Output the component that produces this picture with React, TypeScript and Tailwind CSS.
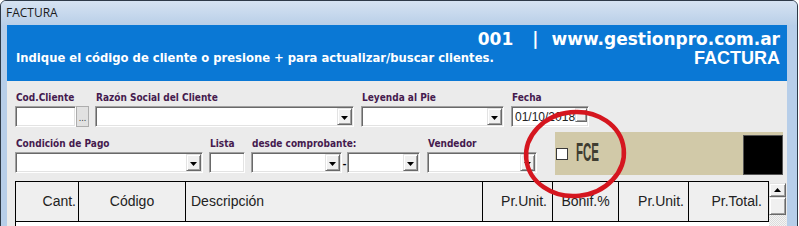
import React from 'react'

const sunken =
  'bg-white border border-t-[#a0a0a0] border-l-[#a0a0a0] border-b-white border-r-white shadow-[inset_1px_1px_0_#696969,inset_-1px_-1px_0_#e3e3e3]'
const raised =
  'bg-[#f0f0f0] border border-t-[#e3e3e3] border-l-[#e3e3e3] border-b-[#696969] border-r-[#696969] shadow-[inset_1px_1px_0_#ffffff,inset_-1px_-1px_0_#a0a0a0]'
const label =
  "h-[13px] leading-[13px] pl-[1px] text-[10px] font-bold text-[#451a4e] font-['DejaVu_Sans_Condensed','DejaVu_Sans',sans-serif] whitespace-nowrap"

const Arrow = ({ up }: { up?: boolean }) => (
  <svg width="7" height="4" viewBox="0 0 7 4">
    <path d={up ? 'M0 4h7L3.5 0z' : 'M0 0h7L3.5 4z'} fill="#000" />
  </svg>
)

const DropBtn = () => (
  <div className={`w-[15px] h-[17px] ${raised} flex items-center justify-center pt-[2px]`}>
    <Arrow />
  </div>
)

const Combo = ({ className }: { className: string }) => (
  <div className={`${className} h-[21px] ${sunken} flex items-center justify-end pr-[1px]`}>
    <DropBtn />
  </div>
)

const Field = ({ title, children, className }: { title: string; children: React.ReactNode; className?: string }) => (
  <div className={`flex flex-col ${className ?? ''}`}>
    <div className={label}>{title}</div>
    <div className="mt-[2px] flex items-center">{children}</div>
  </div>
)

// ? Table header columns
const columns = [
  { title: 'Cant.', cls: 'w-[63px] justify-end pr-[2px]' },
  { title: 'Código', cls: 'w-[107px] justify-center' },
  { title: 'Descripción', cls: 'w-[297px] justify-start pl-[5px]' },
  { title: 'Pr.Unit.', cls: 'w-[70px] justify-end pr-[5px]' },
  { title: 'Bonif.%', cls: 'w-[66px] justify-center' },
  { title: 'Pr.Unit.', cls: 'w-[70px] justify-end pr-[4px]' },
  { title: 'Pr.Total.', cls: 'w-[79px] justify-end pr-[6px]' },
]

export default function App() {
  return (
    <div className="relative w-[799px] h-[226px] overflow-hidden bg-white">
      <div className="w-[798px] h-[240px] flex flex-col border border-[#2e3a48] rounded-t-[6px] bg-[#b7cee9] overflow-hidden">
        {/* title bar */}
        <div className="h-[24px] shrink-0 flex items-center pl-[5px] bg-gradient-to-b from-[#d6e3f2] to-[#b9cfe8] text-[12px] text-[#1a1a1a] font-['Open_Sans',sans-serif]">
          FACTURA
        </div>

        <div className="flex-1 ml-[6px] mr-[10px] bg-[#ebebeb] flex flex-col">
          {/* blue header */}
          <div className="h-[56px] shrink-0 bg-[#0a78d5] text-white flex flex-col pt-[4px] pr-[7px] pl-[9px]">
            <div className="h-[20px] leading-[20px] flex justify-end items-center text-[17px] font-bold font-['DejaVu_Sans',sans-serif]">
              <span>001</span>
              <span className="ml-[19px] mr-[13px]">|</span>
              <span>www.gestionpro.com.ar</span>
            </div>
            <div className="h-[19px] flex justify-between items-center">
              <span className="text-[11.6px] font-bold font-['DejaVu_Sans',sans-serif]">
                Indique el código de cliente o presione + para actualizar/buscar clientes.
              </span>
              <span className="text-[18px] font-bold font-['Liberation_Sans',sans-serif]">FACTURA</span>
            </div>
          </div>

          {/* form */}
          <div className="pl-[8px] pt-[10px] flex flex-col">
            {/* row 1 */}
            <div className="flex items-start">
              <Field title="Cod.Cliente">
                <div className={`w-[61px] h-[21px] ${sunken}`} />
                <div className="w-[13px] h-[21px] bg-[#e1e1e1] border border-[#adadad] flex items-end justify-center pb-[3px] text-[8px] leading-none text-[#333] font-['DejaVu_Sans',sans-serif]">
                  ...
                </div>
              </Field>
              <Field title="Razón Social del Cliente" className="ml-[6px]">
                <Combo className="w-[259px]" />
              </Field>
              <Field title="Leyenda al Pie" className="ml-[7px]">
                <Combo className="w-[143px]" />
              </Field>
              <Field title="Fecha" className="ml-[7px]">
                <div className={`w-[78px] h-[21px] ${sunken} flex items-center justify-between pl-[3px] pr-[1px]`}>
                  <span className="text-[12px] text-[#222] font-['Liberation_Sans',sans-serif]">01/10/2018</span>
                  <div className={`w-[16px] h-[14px] self-start mt-[1px] ${raised}`} />
                </div>
              </Field>
            </div>

            {/* row 2 */}
            <div className="mt-[5px] flex items-start">
              <Field title="Condición de Pago" className="pt-[5px]">
                <Combo className="w-[188px]" />
              </Field>
              <Field title="Lista" className="pt-[5px] ml-[6px]">
                <div className={`w-[36px] h-[21px] ${sunken}`} />
              </Field>
              <Field title="desde comprobante:" className="pt-[5px] ml-[6px]">
                <Combo className="w-[91px]" />
                <span className="w-[5px] text-center text-[11px] font-bold leading-none text-black">-</span>
                <Combo className="w-[73px]" />
              </Field>
              <Field title="Vendedor" className="pt-[5px] ml-[7px]">
                <Combo className="w-[110px]" />
              </Field>
              {/* FCE panel */}
              <div className="ml-[18px] w-[228px] h-[43px] bg-[#d1c9a8] flex items-start">
                <div className="h-full flex items-center pl-[1px]">
                  <div className="w-[12px] h-[12px] bg-white border border-[#3a3a3a]" />
                  <span className="ml-[8px] inline-block w-[28px] overflow-visible">
                    <span className="inline-block origin-left scale-x-[0.46] text-[25px] font-bold leading-none text-[#3f3d31] font-['Liberation_Sans',sans-serif]">
                      FCE
                    </span>
                  </span>
                </div>
                <div className="ml-auto mt-[3px] w-[40px] h-[40px] bg-black border border-[#555]" />
              </div>
            </div>

            {/* grid */}
            <div className="mt-[6px] flex items-start">
              <div className="flex flex-col">
                <div className="flex h-[41px] border border-black bg-[#efefef]">
                  {columns.map((c, i) => (
                    <div
                      key={i}
                      className={`${c.cls} h-full flex items-center border-r border-black last:border-r-0 text-[14px] text-[#222] font-['Liberation_Sans_Narrow','Liberation_Sans',sans-serif]`}
                    >
                      {c.title}
                    </div>
                  ))}
                </div>
                <div className="h-[20px] bg-white border-l border-black" />
              </div>
              <div className="w-[17px] flex flex-col bg-[#e6e6e6]">
                <div className="h-[2px] bg-[#ebebeb]" />
                <div className={`h-[14px] ${raised} flex items-center justify-center`}>
                  <Arrow up />
                </div>
                <div className={`h-[18px] ${raised}`} />
                <div className="h-[30px] bg-[repeating-conic-gradient(#f4f4f4_0_25%,#dcdcdc_0_50%)] bg-[length:2px_2px]" />
              </div>
            </div>
          </div>
        </div>
      </div>

      {/* red annotation circle */}
      <svg className="absolute left-0 top-0 pointer-events-none" width="799" height="226">
        <ellipse cx="575" cy="154" rx="49" ry="42" fill="none" stroke="#d5161f" strokeWidth="4.5" transform="rotate(-6 575 154)" />
      </svg>
    </div>
  )
}
